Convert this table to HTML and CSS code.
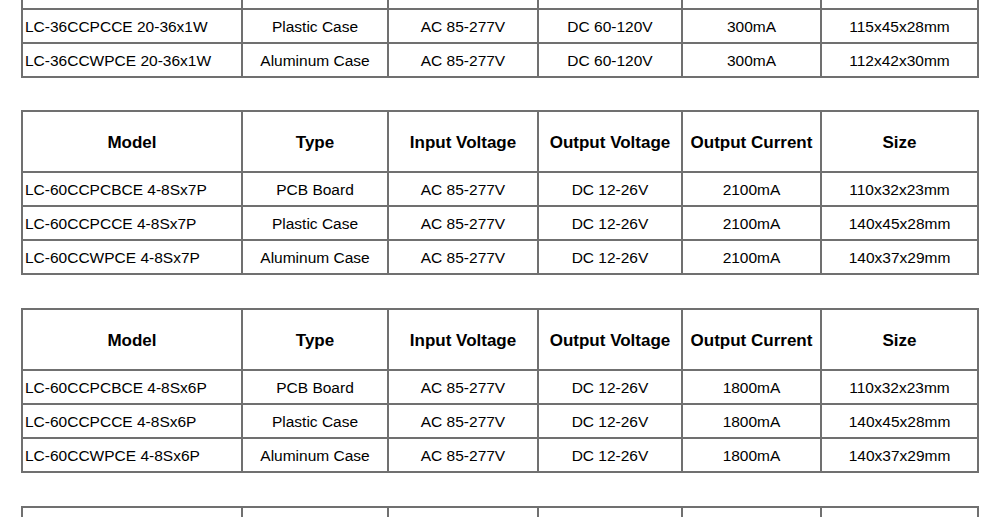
FILE: index.html
```html
<!DOCTYPE html>
<html>
<head>
<meta charset="utf-8">
<link rel="stylesheet" href="styles.css">
</head>
<body>
<div class="page">
  <table class="spec lead">
    <colgroup><col class="c1"><col class="c2"><col class="c3"><col class="c4"><col class="c5"><col class="c6"></colgroup>
    <tr class="cut"><td></td><td></td><td></td><td></td><td></td><td></td></tr>
    <tr><td class="model">LC-36CCPCCE 20-36x1W</td><td>Plastic Case</td><td>AC 85-277V</td><td>DC 60-120V</td><td>300mA</td><td>115x45x28mm</td></tr>
    <tr><td class="model">LC-36CCWPCE 20-36x1W</td><td>Aluminum Case</td><td>AC 85-277V</td><td>DC 60-120V</td><td>300mA</td><td>112x42x30mm</td></tr>
  </table>
  <table class="spec">
    <colgroup><col class="c1"><col class="c2"><col class="c3"><col class="c4"><col class="c5"><col class="c6"></colgroup>
    <tr class="head"><th>Model</th><th>Type</th><th>Input Voltage</th><th>Output Voltage</th><th>Output Current</th><th>Size</th></tr>
    <tr><td class="model">LC-60CCPCBCE 4-8Sx7P</td><td>PCB Board</td><td>AC 85-277V</td><td>DC 12-26V</td><td>2100mA</td><td>110x32x23mm</td></tr>
    <tr><td class="model">LC-60CCPCCE 4-8Sx7P</td><td>Plastic Case</td><td>AC 85-277V</td><td>DC 12-26V</td><td>2100mA</td><td>140x45x28mm</td></tr>
    <tr><td class="model">LC-60CCWPCE 4-8Sx7P</td><td>Aluminum Case</td><td>AC 85-277V</td><td>DC 12-26V</td><td>2100mA</td><td>140x37x29mm</td></tr>
  </table>
  <table class="spec">
    <colgroup><col class="c1"><col class="c2"><col class="c3"><col class="c4"><col class="c5"><col class="c6"></colgroup>
    <tr class="head"><th>Model</th><th>Type</th><th>Input Voltage</th><th>Output Voltage</th><th>Output Current</th><th>Size</th></tr>
    <tr><td class="model">LC-60CCPCBCE 4-8Sx6P</td><td>PCB Board</td><td>AC 85-277V</td><td>DC 12-26V</td><td>1800mA</td><td>110x32x23mm</td></tr>
    <tr><td class="model">LC-60CCPCCE 4-8Sx6P</td><td>Plastic Case</td><td>AC 85-277V</td><td>DC 12-26V</td><td>1800mA</td><td>140x45x28mm</td></tr>
    <tr><td class="model">LC-60CCWPCE 4-8Sx6P</td><td>Aluminum Case</td><td>AC 85-277V</td><td>DC 12-26V</td><td>1800mA</td><td>140x37x29mm</td></tr>
  </table>
  <table class="spec">
    <colgroup><col class="c1"><col class="c2"><col class="c3"><col class="c4"><col class="c5"><col class="c6"></colgroup>
    <tr class="head"><th></th><th></th><th></th><th></th><th></th><th></th></tr>
  </table>
</div>
</body>
</html>
```
FILE: styles.css
```css
html, body {
  margin: 0;
  padding: 0;
  background: #fff;
  overflow: hidden;
  height: 517px;
}
.page {
  margin-top: -26px;
  padding-left: 21px;
  display: flex;
  flex-direction: column;
  gap: 33px;
  font-family: "Liberation Sans", Arial, sans-serif;
  color: #000;
}
.spec {
  border-collapse: collapse;
  table-layout: fixed;
  width: 958px;
}
.spec.lead {
  margin-bottom: -1px;
}
.c1 { width: 220px; }
.c2 { width: 146px; }
.c3 { width: 150px; }
.c4 { width: 144px; }
.c5 { width: 139px; }
.c6 { width: 157px; }
.spec th, .spec td {
  border: 2px solid #707070;
  padding: 2px 0 0 0;
  text-align: center;
  white-space: nowrap;
  overflow: hidden;
}
.spec th {
  height: 57px;
  font-size: 17px;
  font-weight: bold;
}
.spec td {
  height: 30px;
  font-size: 15.5px;
}
.spec td.model {
  text-align: left;
  padding-left: 2px;
}
```
